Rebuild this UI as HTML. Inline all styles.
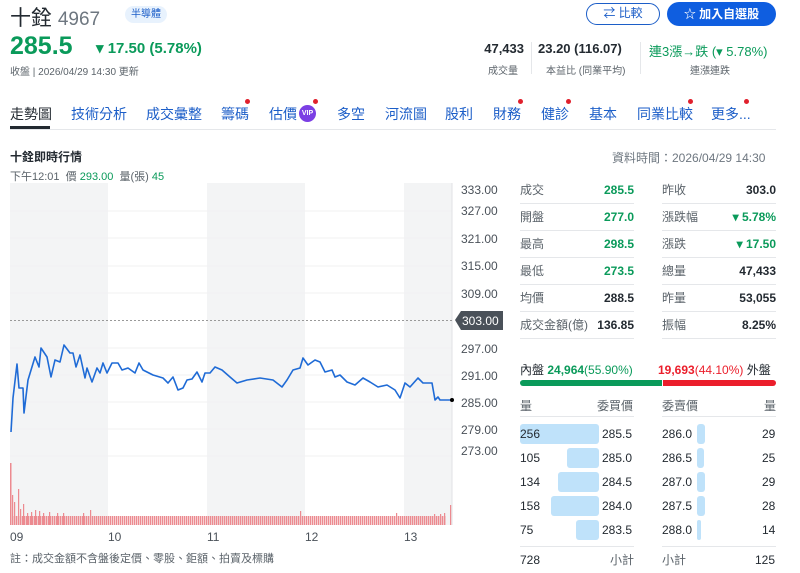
<!DOCTYPE html>
<html><head><meta charset="utf-8"><style>
*{margin:0;padding:0;box-sizing:border-box}
body{width:800px;height:573px;background:#fff;font-family:"Liberation Sans","Noto Sans CJK TC",sans-serif;color:#232a31;position:relative;overflow:hidden}
.a{position:absolute;white-space:nowrap}
.g{color:#0a9a5a}.r{color:#eb1e2b}
.gray{color:#5b636a}
.tab{position:absolute;top:104px;font-size:14px;color:#1c5ec8}
.dot{position:absolute;width:5px;height:5px;border-radius:50%;background:#e0202c}
.row{position:absolute;height:27px;border-bottom:1px solid #e5e7ea;font-size:12px;line-height:26px}
.row span{position:absolute}
.ob{position:absolute;font-size:12px;line-height:26px}
.bar{position:absolute;background:#bfe2fa;border-radius:3px;height:20px}
</style></head><body>
<div class="a" style="left:10px;top:2px;font-size:21px;color:#232a31">十銓 <span style="color:#6e7780;font-size:19px">4967</span></div>
<div class="a" style="left:125px;top:6px;width:42px;height:17px;border-radius:9px;background:#e8f2fd;color:#1c5ec8;font-size:10px;line-height:17px;text-align:center">半導體</div>
<div class="a g" style="left:10px;top:32px;font-size:25px;font-weight:bold">285.5</div>
<div class="a g" style="left:96px;top:39px;font-size:15px;font-weight:bold">▾ 17.50 (5.78%)</div>
<div class="a gray" style="left:10px;top:63px;font-size:10px">收盤 | 2026/04/29 14:30 更新</div>
<div class="a" style="left:586px;top:3px;width:74px;height:22px;border:1.5px solid #1c5ec8;border-radius:11px;color:#1c5ec8;font-size:12px;line-height:19px;text-align:center">⇄ 比較</div>
<div class="a" style="left:667px;top:2px;width:109px;height:24px;background:#0f5ee0;border-radius:12px;color:#fff;font-size:12px;font-weight:bold;line-height:24px;text-align:center">☆ 加入自選股</div>
<div class="a" style="left:470px;top:41px;width:54px;text-align:right;font-size:13px;font-weight:bold">47,433</div>
<div class="a gray" style="left:470px;top:62px;width:48px;text-align:right;font-size:10px">成交量</div>
<div class="a" style="left:531px;top:42px;width:1px;height:32px;background:#e5e7ea"></div>
<div class="a" style="left:538px;top:41px;font-size:13px;font-weight:bold">23.20 (116.07)</div>
<div class="a gray" style="left:546px;top:62px;font-size:10px">本益比 (同業平均)</div>
<div class="a" style="left:640px;top:42px;width:1px;height:32px;background:#e5e7ea"></div>
<div class="a g" style="left:649px;top:41px;font-size:13px">連3漲→跌 (▾ 5.78%)</div>
<div class="a gray" style="left:690px;top:62px;font-size:10px">連漲連跌</div>

<div class="tab" style="left:10px;color:#232a31">走勢圖</div>
<div class="a" style="left:10px;top:126px;width:40px;height:3px;background:#232a31"></div>
<div class="tab" style="left:71px">技術分析</div>
<div class="tab" style="left:146px">成交彙整</div>
<div class="tab" style="left:221px">籌碼</div><div class="dot" style="left:245px;top:99px"></div>
<div class="tab" style="left:269px">估價</div>
<div class="a" style="left:299px;top:105px;width:17px;height:17px;border-radius:50%;background:#7b3fe4;color:#fff;font-size:7px;font-weight:bold;line-height:17px;text-align:center">VIP</div><div class="dot" style="left:313px;top:99px"></div>
<div class="tab" style="left:337px">多空</div>
<div class="tab" style="left:385px">河流圖</div>
<div class="tab" style="left:445px">股利</div>
<div class="tab" style="left:493px">財務</div><div class="dot" style="left:518px;top:99px"></div>
<div class="tab" style="left:541px">健診</div><div class="dot" style="left:566px;top:99px"></div>
<div class="tab" style="left:589px">基本</div>
<div class="tab" style="left:637px">同業比較</div><div class="dot" style="left:688px;top:99px"></div>
<div class="tab" style="left:711px">更多...</div><div class="dot" style="left:744px;top:99px"></div>
<div class="a" style="left:10px;top:129px;width:766px;height:1px;background:#e5e7ea"></div>

<div class="a" style="left:10px;top:148px;font-size:12px;font-weight:bold">十銓即時行情</div>
<div class="a gray" style="left:10px;top:168px;font-size:11px">下午12:01 &nbsp;價 <span class="g">293.00</span> &nbsp;量(張) <span class="g">45</span></div>
<div class="a gray" style="left:612px;top:149px;font-size:12px;color:#6e7780">資料時間：2026/04/29 14:30</div>

<svg class="a" style="left:0;top:180px" width="510" height="365" viewBox="0 180 510 365">
<defs><pattern id="st" width="2" height="10" patternUnits="userSpaceOnUse"><rect width="1.4" height="10" fill="#ec8a90"/></pattern></defs>
<rect x="10" y="183" width="98" height="342" fill="#f3f4f5"/>
<rect x="207" y="183" width="98" height="342" fill="#f3f4f5"/>
<rect x="404" y="183" width="48" height="342" fill="#f3f4f5"/>
<g stroke="#f0f1f2" stroke-width="1">
<line x1="10" y1="211" x2="452" y2="211"/><line x1="10" y1="238" x2="452" y2="238"/><line x1="10" y1="266" x2="452" y2="266"/><line x1="10" y1="293" x2="452" y2="293"/><line x1="10" y1="348" x2="452" y2="348"/><line x1="10" y1="375" x2="452" y2="375"/><line x1="10" y1="402" x2="452" y2="402"/><line x1="10" y1="429" x2="452" y2="429"/><line x1="10" y1="456" x2="452" y2="456"/>
</g>
<line x1="452" y1="183" x2="452" y2="525" stroke="#e0e2e5"/>
<line x1="10" y1="320.5" x2="452" y2="320.5" stroke="#999" stroke-dasharray="2,2"/>
<polyline fill="none" stroke="#1f6bd6" stroke-width="1.6" stroke-linejoin="round" points="11,432 13,398 17,364 19,388 23,388 24,413 28,380 35,357 39,367 41,348 47,357 51,377 55,360 60,362 64,345 70,353 73,353 76,367 80,355 85,378 87,368 92,382 97,368 100,373 103,363 107,373 112,363 118,363 122,370 128,368 135,373 139,363 143,370 153,375 163,378 168,383 173,377 178,390 183,388 187,380 192,379 197,372 202,382 205,373 210,373 215,367 222,370 230,377 237,383 247,380 260,378 273,380 282,387 287,380 293,370 300,368 303,358 308,365 315,360 320,362 325,372 332,370 335,377 340,375 347,382 355,385 363,378 370,382 378,387 387,385 395,390 400,398 405,383 410,387 418,378 423,383 432,383 435,400 438,397 440,400 452,400"/>
<circle cx="452" cy="400" r="2" fill="#000"/>
<rect x="10" y="516" width="436" height="9" fill="url(#st)"/>
<g fill="#ec8a90">
<rect x="10" y="463" width="1.5" height="62"/><rect x="12" y="495" width="1.2" height="30"/><rect x="14" y="502" width="1.2" height="23"/><rect x="18" y="489" width="1.2" height="36"/><rect x="20" y="509" width="1.2" height="16"/><rect x="23" y="504" width="1.2" height="21"/><rect x="27" y="513" width="1.2" height="12"/><rect x="31" y="512" width="1.2" height="13"/><rect x="35" y="510" width="1.2" height="15"/><rect x="39" y="511" width="1.2" height="14"/><rect x="43" y="513" width="1.2" height="12"/><rect x="49" y="512" width="1.2" height="13"/><rect x="57" y="513" width="1.2" height="12"/><rect x="63" y="513" width="1.2" height="12"/><rect x="83" y="513" width="1.2" height="12"/><rect x="90" y="510" width="1.2" height="15"/><rect x="300" y="511" width="1.2" height="14"/><rect x="396" y="513" width="1.2" height="12"/><rect x="434" y="514" width="1.2" height="11"/><rect x="440" y="514" width="1.2" height="11"/><rect x="444" y="513" width="1.2" height="12"/><rect x="450" y="505" width="1.2" height="20"/>
</g>
<g font-size="12" fill="#4a5159" font-family="Liberation Sans,sans-serif">
<text x="461" y="194">333.00</text><text x="461" y="215">327.00</text><text x="461" y="243">321.00</text><text x="461" y="270">315.00</text><text x="461" y="298">309.00</text><text x="461" y="353">297.00</text><text x="461" y="380">291.00</text><text x="461" y="407">285.00</text><text x="461" y="434">279.00</text><text x="461" y="455">273.00</text>
<text x="10" y="541">09</text><text x="108" y="541">10</text><text x="207" y="541">11</text><text x="305" y="541">12</text><text x="404" y="541">13</text>
</g>
<path d="M455,320 L461,311 H503 V330 H461 Z" fill="#4a5159"/>
<text x="462" y="325" font-size="12" fill="#fff" font-family="Liberation Sans,sans-serif">303.00</text>
</svg>
<div class="a gray" style="left:10px;top:550px;font-size:11px">註：成交金額不含盤後定價、零股、鉅額、拍賣及標購</div>

<div class="row" style="left:520px;top:177px;width:114px"><span class="gray" style="left:0">成交</span><span class="g" style="right:0;font-weight:bold">285.5</span></div>
<div class="row" style="left:520px;top:204px;width:114px"><span class="gray" style="left:0">開盤</span><span class="g" style="right:0;font-weight:bold">277.0</span></div>
<div class="row" style="left:520px;top:231px;width:114px"><span class="gray" style="left:0">最高</span><span class="g" style="right:0;font-weight:bold">298.5</span></div>
<div class="row" style="left:520px;top:258px;width:114px"><span class="gray" style="left:0">最低</span><span class="g" style="right:0;font-weight:bold">273.5</span></div>
<div class="row" style="left:520px;top:285px;width:114px"><span class="gray" style="left:0">均價</span><span style="right:0;font-weight:bold">288.5</span></div>
<div class="row" style="left:520px;top:312px;width:114px"><span class="gray" style="left:0">成交金額(億)</span><span style="right:0;font-weight:bold">136.85</span></div>
<div class="row" style="left:662px;top:177px;width:114px"><span class="gray" style="left:0">昨收</span><span style="right:0;font-weight:bold">303.0</span></div>
<div class="row" style="left:662px;top:204px;width:114px"><span class="gray" style="left:0">漲跌幅</span><span class="g" style="right:0;font-weight:bold">▾ 5.78%</span></div>
<div class="row" style="left:662px;top:231px;width:114px"><span class="gray" style="left:0">漲跌</span><span class="g" style="right:0;font-weight:bold">▾ 17.50</span></div>
<div class="row" style="left:662px;top:258px;width:114px"><span class="gray" style="left:0">總量</span><span style="right:0;font-weight:bold">47,433</span></div>
<div class="row" style="left:662px;top:285px;width:114px"><span class="gray" style="left:0">昨量</span><span style="right:0;font-weight:bold">53,055</span></div>
<div class="row" style="left:662px;top:312px;width:114px"><span class="gray" style="left:0">振幅</span><span style="right:0;font-weight:bold">8.25%</span></div>

<div class="a" style="left:520px;top:361px;font-size:12px">內盤 <span class="g" style="font-weight:bold">24,964</span><span class="g">(55.90%)</span></div>
<div class="a" style="left:658px;top:361px;font-size:12px"><span class="r" style="font-weight:bold">19,693</span><span class="r">(44.10%)</span> 外盤</div>
<div class="a" style="left:520px;top:380px;width:142px;height:6px;background:#0a9a5a;border-radius:3px 0 0 3px"></div>
<div class="a" style="left:663px;top:380px;width:113px;height:6px;background:#eb1e2b;border-radius:0 3px 3px 0"></div>
<div class="a gray" style="left:520px;top:397px;font-size:12px">量</div>
<div class="a gray" style="left:597px;top:397px;font-size:12px">委買價</div>
<div class="a gray" style="left:662px;top:397px;font-size:12px">委賣價</div>
<div class="a gray" style="left:764px;top:397px;font-size:12px">量</div>
<div class="a" style="left:520px;top:416px;width:114px;height:1px;background:#e5e7ea"></div>
<div class="a" style="left:662px;top:416px;width:114px;height:1px;background:#e5e7ea"></div>

<div class="bar" style="left:520px;top:424px;width:79px"></div>
<div class="bar" style="left:567px;top:448px;width:32px"></div>
<div class="bar" style="left:558px;top:472px;width:41px"></div>
<div class="bar" style="left:551px;top:496px;width:48px"></div>
<div class="bar" style="left:576px;top:520px;width:23px"></div>
<div class="bar" style="left:697px;top:424px;width:8px"></div>
<div class="bar" style="left:697px;top:448px;width:7px"></div>
<div class="bar" style="left:697px;top:472px;width:8px"></div>
<div class="bar" style="left:697px;top:496px;width:8px"></div>
<div class="bar" style="left:697px;top:520px;width:4px"></div>

<div class="ob" style="left:520px;top:421px">256</div><div class="ob" style="left:520px;top:445px">105</div><div class="ob" style="left:520px;top:469px">134</div><div class="ob" style="left:520px;top:493px">158</div><div class="ob" style="left:520px;top:517px">75</div>
<div class="ob" style="left:602px;top:421px">285.5</div><div class="ob" style="left:602px;top:445px">285.0</div><div class="ob" style="left:602px;top:469px">284.5</div><div class="ob" style="left:602px;top:493px">284.0</div><div class="ob" style="left:602px;top:517px">283.5</div>
<div class="ob" style="left:662px;top:421px">286.0</div><div class="ob" style="left:662px;top:445px">286.5</div><div class="ob" style="left:662px;top:469px">287.0</div><div class="ob" style="left:662px;top:493px">287.5</div><div class="ob" style="left:662px;top:517px">288.0</div>
<div class="ob" style="left:762px;top:421px">29</div><div class="ob" style="left:762px;top:445px">25</div><div class="ob" style="left:762px;top:469px">29</div><div class="ob" style="left:762px;top:493px">28</div><div class="ob" style="left:762px;top:517px">14</div>
<div class="a" style="left:520px;top:546px;width:114px;height:1px;background:#e5e7ea"></div>
<div class="a" style="left:662px;top:546px;width:114px;height:1px;background:#e5e7ea"></div>
<div class="ob" style="left:520px;top:547px">728</div>
<div class="ob gray" style="left:610px;top:547px">小計</div>
<div class="ob gray" style="left:662px;top:547px">小計</div>
<div class="ob" style="left:755px;top:547px">125</div>
</body></html>
